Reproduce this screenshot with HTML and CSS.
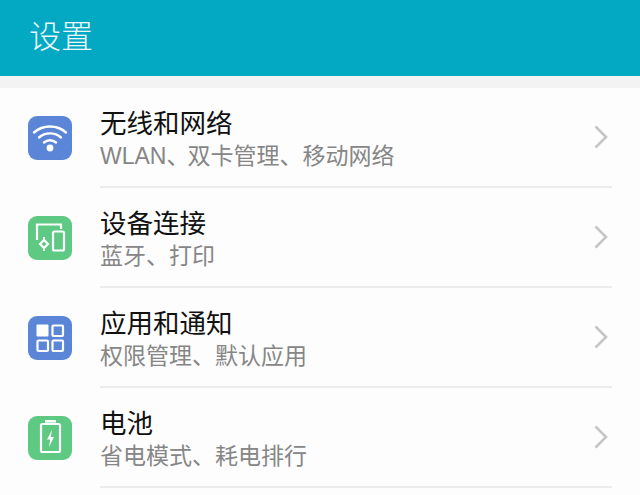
FILE: index.html
```html
<!DOCTYPE html>
<html>
<head>
<title>设置</title>
<link rel="stylesheet" href="styles.css">
</head>
<body>

<div class="topbar"><h1 class="topbar-title">设置</h1></div>

<div class="settings-list">

  <div class="row">
    <svg class="row-icon" viewBox="0 0 44 44">
      <rect width="44" height="44" rx="9" fill="#5b86d8"/>
      <g fill="none" stroke="#fff" stroke-width="2.4" stroke-linecap="round">
        <path d="M6 16.5C15 8.5 29 8.5 38 16.5"/>
        <path d="M11 21.5C17 16 27 16 33 21.5"/>
        <path d="M16 26.5C19.5 23.5 24.5 23.5 28 26.5"/>
      </g>
      <circle cx="22" cy="32" r="3.4" fill="#fff"/>
    </svg>
    <div class="row-body">
      <div class="row-text">
        <div class="row-title">无线和网络</div>
        <div class="row-sub">WLAN<span class="tight">、</span>双卡管理、移动网络</div>
      </div>
      <svg class="chevron" viewBox="0 0 16 26"><path d="M2.5 2.5L13 13L2.5 23.5"/></svg>
    </div>
  </div>

  <div class="row">
    <svg class="row-icon" viewBox="0 0 44 44">
      <rect width="44" height="44" rx="9" fill="#5ec983"/>
      <g fill="none" stroke="#fff" stroke-width="2.2">
        <path d="M9 24V8.5H33V13"/>
        <rect x="25" y="15.5" width="11" height="19" rx="1.5"/>
        <path d="M16 21V24M16 32V35" stroke-width="1.8"/>
        <path d="M16 24L20 28L16 32L12 28Z"/>
      </g>
    </svg>
    <div class="row-body">
      <div class="row-text">
        <div class="row-title">设备连接</div>
        <div class="row-sub">蓝牙、打印</div>
      </div>
      <svg class="chevron" viewBox="0 0 16 26"><path d="M2.5 2.5L13 13L2.5 23.5"/></svg>
    </div>
  </div>

  <div class="row">
    <svg class="row-icon" viewBox="0 0 44 44">
      <rect width="44" height="44" rx="9" fill="#5b86d8"/>
      <rect x="8.5" y="8.5" width="12" height="12" rx="1" fill="#fff"/>
      <g fill="none" stroke="#fff" stroke-width="2.2">
        <rect x="24.5" y="9.5" width="10.5" height="10.5" rx="1"/>
        <rect x="9.5" y="24.5" width="10.5" height="10.5" rx="1"/>
        <rect x="24.5" y="24.5" width="10.5" height="10.5" rx="1"/>
      </g>
    </svg>
    <div class="row-body">
      <div class="row-text">
        <div class="row-title">应用和通知</div>
        <div class="row-sub">权限管理、默认应用</div>
      </div>
      <svg class="chevron" viewBox="0 0 16 26"><path d="M2.5 2.5L13 13L2.5 23.5"/></svg>
    </div>
  </div>

  <div class="row">
    <svg class="row-icon" viewBox="0 0 44 44">
      <rect width="44" height="44" rx="9" fill="#5ec983"/>
      <rect x="17" y="4" width="11" height="2.6" fill="#fff"/>
      <rect x="13" y="8" width="19" height="28" rx="1.5" fill="none" stroke="#fff" stroke-width="2.2"/>
      <path d="M24 14L19 23.5H22.2L21 31L26 21H22.8Z" fill="#fff"/>
    </svg>
    <div class="row-body">
      <div class="row-text">
        <div class="row-title">电池</div>
        <div class="row-sub">省电模式、耗电排行</div>
      </div>
      <svg class="chevron" viewBox="0 0 16 26"><path d="M2.5 2.5L13 13L2.5 23.5"/></svg>
    </div>
  </div>

</div>

</body>
</html>
```

FILE: styles.css
```css
body {
    margin: 0;
    background-color: #fdfdfd;
    font-family: "Liberation Sans", "Noto Sans CJK SC", sans-serif;
    overflow: hidden;
}
.topbar {
    height: 76px;
    background-color: #03a9c2;
    display: flex;
    align-items: center;
    padding-left: 29px;
}
.topbar-title {
    margin: 0 0 2px;
    color: #eaf8fa;
    font-size: 32px;
    font-weight: 300;
    line-height: 40px;
}
.settings-list {
    border-top: 12px solid #f3f3f3;
}
.row {
    height: 100px;
    display: flex;
    align-items: center;
    padding: 0 28px;
}
.row-icon {
    width: 44px;
    height: 44px;
    flex: none;
    margin-top: -1px;
}
.row-body {
    flex: 1;
    height: 100px;
    box-sizing: border-box;
    margin-left: 28px;
    border-bottom: 2px solid #ececec;
    display: flex;
    align-items: center;
}
.row-text {
    flex: 1;
    padding-top: 4px;
}
.row-title {
    color: #111;
    font-size: 26.5px;
    line-height: 34px;
}
.row-sub {
    color: #868686;
    font-size: 23px;
    line-height: 30px;
}
.tight {
    letter-spacing: -2px;
}
.chevron {
    width: 16px;
    height: 26px;
    flex: none;
    margin-right: 3px;
    fill: none;
    stroke: #c6c6c6;
    stroke-width: 2.6;
}
```
